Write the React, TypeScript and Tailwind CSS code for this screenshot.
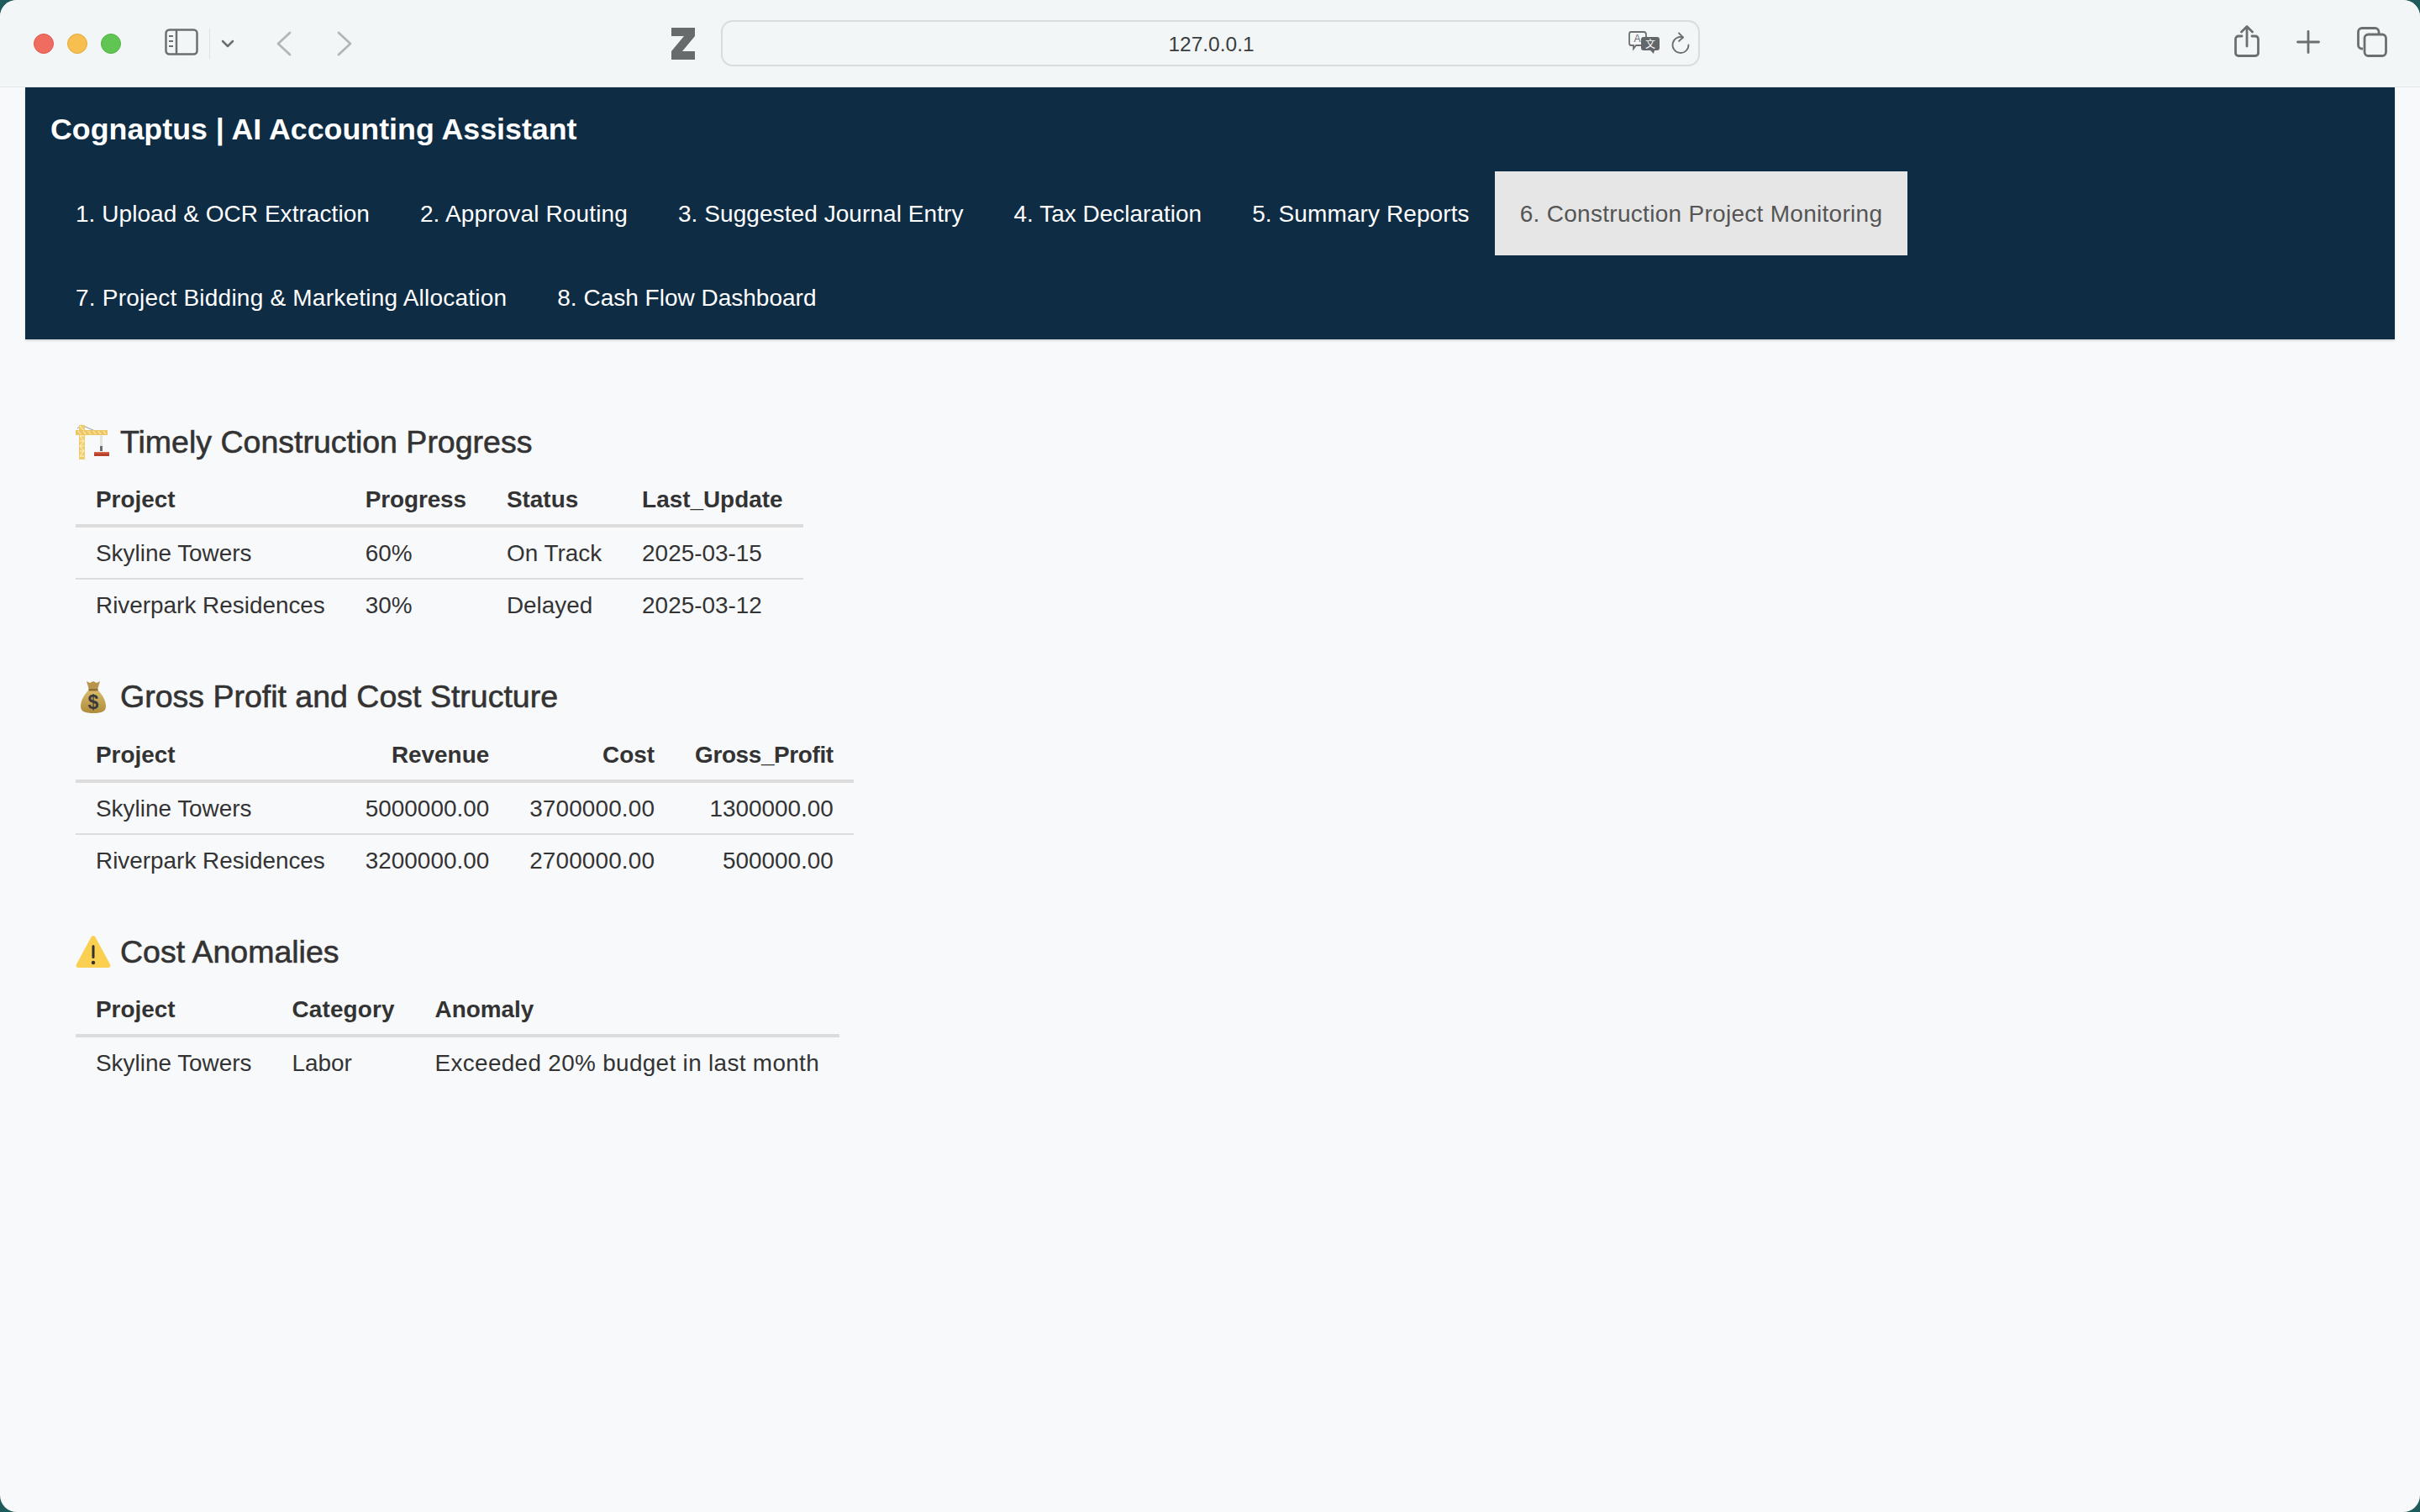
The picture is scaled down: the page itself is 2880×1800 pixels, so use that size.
const tabs = [
  { label: '1. Upload & OCR Extraction', fit: 'tracking-[0.05px]' },
  { label: '2. Approval Routing', fit: 'tracking-[0.14px]' },
  { label: '3. Suggested Journal Entry', fit: 'tracking-[0.07px]' },
  { label: '4. Tax Declaration', fit: '' },
  { label: '5. Summary Reports', fit: 'tracking-[0.1px]' },
  { label: '6. Construction Project Monitoring', fit: 'tracking-[0.29px]' },
  { label: '7. Project Bidding & Marketing Allocation', fit: 'tracking-[0.22px]' },
  { label: '8. Cash Flow Dashboard', fit: '' },
];

const CraneEmoji = () => (
  <svg width="42" height="42" viewBox="0 0 42 42" className="shrink-0">
    <path d="M2 5 L7 1 L30 11" fill="none" stroke="#9a9a9a" strokeWidth="1" />
    <rect x="4" y="1" width="7" height="41" fill="#f0cc6a" />
    <path d="M5 8h5M5 14h5M5 20h5M5 26h5M5 32h5M5 38h5M5 2l5 6M10 8l-5 6M5 14l5 6M10 20l-5 6M5 26l5 6M10 32l-5 6" stroke="#fff6d8" strokeWidth="1" />
    <rect x="0" y="7" width="38" height="6" fill="#eec765" />
    <path d="M3 8l3 4M9 8l3 4M15 8l3 4M21 8l3 4M27 8l3 4M33 8l3 4" stroke="#fff3cc" strokeWidth="1" />
    <rect x="29" y="13" width="3" height="15" fill="#e4e4dc" />
    <rect x="29" y="26" width="3" height="6" fill="#6b6b6b" />
    <rect x="22" y="33" width="18" height="5" fill="#b8402c" />
    <rect x="22" y="33" width="18" height="1.5" fill="#d96a4c" />
  </svg>
);

const MoneyEmoji = () => (
  <svg width="42" height="42" viewBox="0 0 42 42" className="shrink-0">
    <defs>
      <linearGradient id="bag" x1="0" y1="0" x2="0" y2="1">
        <stop offset="0" stopColor="#d8bc6c" />
        <stop offset="1" stopColor="#b08c3c" />
      </linearGradient>
    </defs>
    <path d="M13 2 L17 4 L21 2 L25 4 L29 2 L26 12 H16 Z" fill="#b8954a" />
    <path d="M16 12 H26 C32 18 36 25 36 32 C36 38 31 40 21 40 C11 40 6 38 6 32 C6 25 10 18 16 12 Z" fill="url(#bag)" />
    <path d="M15.500 11 H26.500 V13.500 H15.500 Z" fill="#8f6f30" />
    <text x="21" y="35" textAnchor="middle" fontFamily="'Liberation Sans', sans-serif" fontWeight="700" fontSize="23" fill="#3a3a3a">$</text>
  </svg>
);

const WarningEmoji = () => (
  <svg width="42" height="42" viewBox="0 0 42 42" className="shrink-0">
    <path d="M21 2 C22.500 2 23.300 3 24 4.500 L41 36 C42 38.500 41 40 38.500 40 H3.500 C1 40 0 38.500 1 36 L18 4.500 C18.700 3 19.500 2 21 2 Z" fill="#fbcf4f" />
    <rect x="19.500" y="13" width="3" height="16" rx="1.500" fill="#333" />
    <circle cx="21" cy="34" r="2.200" fill="#333" />
  </svg>
);

type Col = { name: string; right?: boolean; headFit?: string; cellFit?: string };

const DataTable = ({ cols, rows }: { cols: Col[]; rows: string[][] }) => (
  <table className="border-separate border-spacing-0 w-max text-[#333] text-[27.900px]">
    <thead>
      <tr>
        {cols.map((c) => (
          <th key={c.name} className={`h-[62px] px-[24px] font-bold border-b-[4px] border-[#dcdcdc] whitespace-nowrap ${c.right ? 'text-right' : 'text-left'} ${c.headFit ?? ''}`}>
            {c.name}
          </th>
        ))}
      </tr>
    </thead>
    <tbody>
      {rows.map((r, i) => (
        <tr key={i}>
          {r.map((v, j) => (
            <td key={j} className={`px-[24px] pt-[2px] whitespace-nowrap ${i < rows.length - 1 ? 'h-[62px] border-b-[2px] border-[#dcdcdc]' : 'h-[60px]'} ${cols[j].right ? 'text-right' : 'text-left'} ${cols[j].cellFit ?? ''}`}>
              {v}
            </td>
          ))}
        </tr>
      ))}
    </tbody>
  </table>
);

const Section = ({ icon, title, children }: { icon: React.ReactNode; title: string; children: React.ReactNode }) => (
  <section className="flex flex-col">
    <h3 className="flex items-center gap-[11px] h-[44px] mb-[18px] text-[37.500px] text-[#333] [-webkit-text-stroke:0.6px_#333] whitespace-nowrap">
      {icon}
      {title}
    </h3>
    {children}
  </section>
);

const Toolbar = () => (
  <div className="flex items-center shrink-0 h-[104px] bg-[#f3f6f7] border-b border-[#e4e7e9] pl-[40px] pr-[39px]">
    <div className="flex items-center gap-[16px]">
      <span className="w-[24px] h-[24px] rounded-full bg-[#f06b60] border border-[#e0574d]" />
      <span className="w-[24px] h-[24px] rounded-full bg-[#f6bf4f] border border-[#e4a93c]" />
      <span className="w-[24px] h-[24px] rounded-full bg-[#61c554] border border-[#52b045]" />
    </div>
    <svg width="40" height="32" viewBox="0 0 40 32" fill="none" stroke="#6b6f70" strokeWidth="2.500" className="ml-[52px] mb-[3px]">
      <rect x="1.500" y="1.500" width="37" height="29" rx="4" />
      <path d="M14 2v28" />
      <path d="M5 9h5M5 15h5M5 21h5" strokeWidth="2" />
    </svg>
    <span className="w-[1px] h-[36px] bg-[#dfe2e3] ml-[13px]" />
    <svg width="16" height="10" viewBox="0 0 16 10" fill="none" stroke="#6b6f70" strokeWidth="2.500" strokeLinecap="round" strokeLinejoin="round" className="ml-[13px]">
      <path d="M2 2l6 6 6-6" />
    </svg>
    <svg width="20" height="30" viewBox="0 0 20 30" fill="none" stroke="#b2b6b7" strokeWidth="2.800" strokeLinecap="round" strokeLinejoin="round" className="ml-[49px]">
      <path d="M17 2L3 15l14 13" />
    </svg>
    <svg width="20" height="30" viewBox="0 0 20 30" fill="none" stroke="#b2b6b7" strokeWidth="2.800" strokeLinecap="round" strokeLinejoin="round" className="ml-[52px]">
      <path d="M3 2l14 13L3 28" />
    </svg>
    <svg width="28" height="38" viewBox="0 0 28 38" className="ml-[379px]">
      <path d="M0 0H28V10L13 28H28V38H0V28L15 10H0Z" fill="#676b6c" />
    </svg>
    <div className="flex items-center relative w-[1165px] h-[55px] ml-[31px] rounded-[14px] border-[2px] border-[#d8dcdd]">
      <span className="flex-1 text-center text-[24.500px] text-[#3a3d3e] pl-[2px] pt-[3px]">127.0.0.1</span>
      <svg width="38" height="28" viewBox="0 0 38 28" className="absolute right-[45px] top-[11px]">
        <path d="M3 1H18C20 1 21 2 21 4V14C21 16 20 17 18 17H9L6 21V17H3C1.500 17 1 16 1 14V4C1 2 1.500 1 3 1Z" fill="#f3f6f7" stroke="#6b6f70" strokeWidth="1.800" />
        <text x="10.500" y="13" textAnchor="middle" fontFamily="'Liberation Sans', sans-serif" fontSize="12" fill="#6b6f70">A</text>
        <path d="M18 7H34C36 7 37 8 37 10V20C37 22 36 23 34 23H31L30 27L26 23H18C16 23 15 22 15 20V10C15 8 16 7 18 7Z" fill="#63676a" />
        <text x="26" y="20" textAnchor="middle" fontFamily="'Noto Sans CJK SC', sans-serif" fontSize="12" fill="#fff">文</text>
      </svg>
      <svg width="24" height="28" viewBox="0 0 24 28" fill="none" stroke="#6b6f70" strokeWidth="1.800" strokeLinecap="round" strokeLinejoin="round" className="absolute right-[9px] top-[12px]">
        <path d="M15 6.500A9.500 9.500 0 1 0 21.500 15.500" />
        <path d="M10 1.500L15 6.500 10 11" />
      </svg>
    </div>
    <svg width="30" height="38" viewBox="0 0 30 38" fill="none" stroke="#6b6f70" strokeWidth="2.800" strokeLinecap="round" strokeLinejoin="round" className="ml-auto mb-[5px]">
      <path d="M9 13H5C3 13 1.500 14.500 1.500 16.500V33C1.500 35 3 36.500 5 36.500H25C27 36.500 28.500 35 28.500 33V16.500C28.500 14.500 27 13 25 13H21" />
      <path d="M15 25V2M8.500 8L15 1.500 21.500 8" />
    </svg>
    <svg width="28" height="28" viewBox="0 0 28 28" fill="none" stroke="#6b6f70" strokeWidth="2.800" strokeLinecap="round" className="ml-[44px] mb-[4px]">
      <path d="M14 1.500v25M1.500 14h25" />
    </svg>
    <svg width="36" height="36" viewBox="0 0 36 36" fill="none" stroke="#6b6f70" strokeWidth="2.800" strokeLinejoin="round" className="ml-[44px] mb-[3px]">
      <path d="M7 26H6C3.500 26 1.500 24 1.500 21.500V6C1.500 3.500 3.500 1.500 6 1.500H21.500C24 1.500 26 3.500 26 6V8" />
      <rect x="9" y="9" width="25.500" height="25.500" rx="4.500" />
    </svg>
  </div>
);

export default function App() {
  return (
    <div className="w-[2880px] h-[1800px] bg-[#1d5c5a] overflow-hidden font-['Liberation_Sans',Arial,sans-serif]">
      <div className="flex flex-col h-full rounded-[20px] overflow-hidden bg-[#f8f9fb]">
        <Toolbar />
        <header className="shrink-0 mx-[30px] h-[300px] bg-[#0e2c44] shadow-[0_2px_2px_rgba(0,0,0,0.12)]">
          <div className="flex items-center h-[100px] pl-[30px] pt-[2px] text-[35.800px] font-bold text-white">Cognaptus | AI Accounting Assistant</div>
          <nav className="flex flex-wrap px-[30px]">
            {tabs.map((t, i) => (
              <div key={t.label} className={`flex items-center h-[100px] px-[30px] pt-[1px] text-[28px] whitespace-nowrap ${t.fit} ${i === 5 ? 'bg-[#e6e6e6] text-[#555]' : 'text-white'}`}>
                {t.label}
              </div>
            ))}
          </nav>
        </header>
        <main className="flex flex-col gap-[57.500px] pl-[90px] pt-[100px]">
          <Section icon={<CraneEmoji />} title="Timely Construction Progress">
            <DataTable
              cols={[{ name: 'Project' }, { name: 'Progress', headFit: 'tracking-[-0.1px]' }, { name: 'Status' }, { name: 'Last_Update' }]}
              rows={[
                ['Skyline Towers', '60%', 'On Track', '2025-03-15'],
                ['Riverpark Residences', '30%', 'Delayed', '2025-03-12'],
              ]}
            />
          </Section>
          <Section icon={<MoneyEmoji />} title="Gross Profit and Cost Structure">
            <DataTable
              cols={[
                { name: 'Project' },
                { name: 'Revenue', right: true },
                { name: 'Cost', right: true, cellFit: 'tracking-[0.15px]' },
                { name: 'Gross_Profit', right: true, headFit: 'tracking-[-0.35px]' },
              ]}
              rows={[
                ['Skyline Towers', '5000000.00', '3700000.00', '1300000.00'],
                ['Riverpark Residences', '3200000.00', '2700000.00', '500000.00'],
              ]}
            />
          </Section>
          <Section icon={<WarningEmoji />} title="Cost Anomalies">
            <DataTable
              cols={[{ name: 'Project' }, { name: 'Category', headFit: 'tracking-[0.15px]' }, { name: 'Anomaly', cellFit: 'tracking-[0.33px]' }]}
              rows={[['Skyline Towers', 'Labor', 'Exceeded 20% budget in last month']]}
            />
          </Section>
        </main>
      </div>
    </div>
  );
}
